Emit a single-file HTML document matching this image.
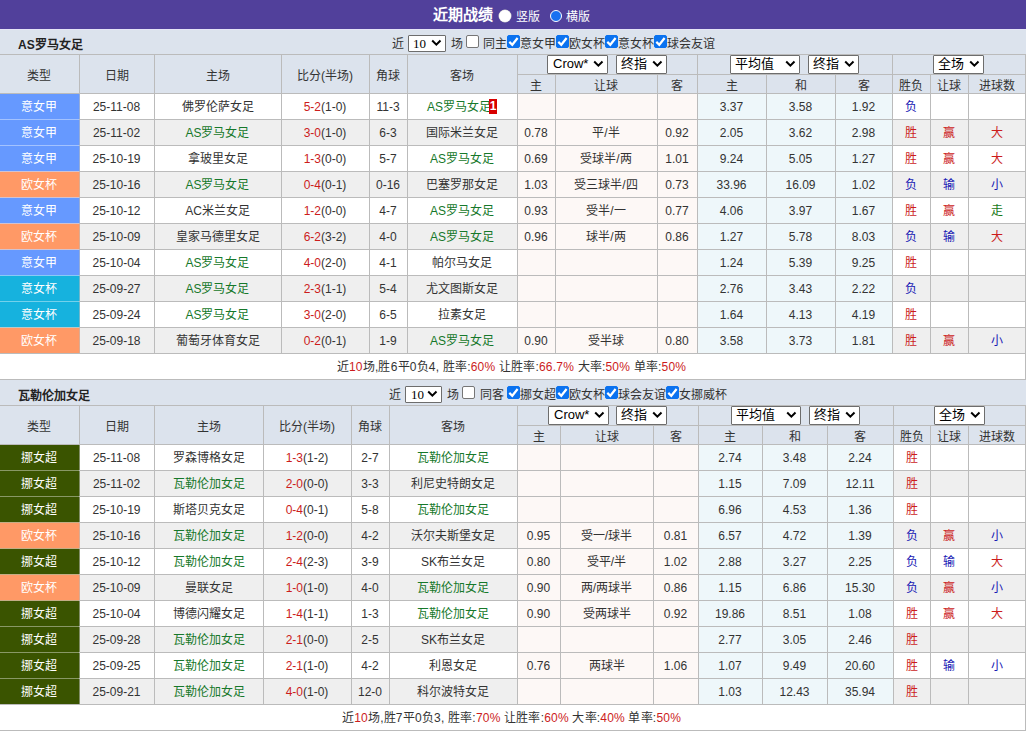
<!DOCTYPE html><html lang="zh-CN"><head><meta charset="utf-8"><style>

*{box-sizing:border-box}
html,body{margin:0;padding:0}
body{width:1031px;height:731px;overflow:hidden;position:relative;background:#fff;font-family:"Liberation Sans",sans-serif;font-size:12px;color:#333}
.r{position:absolute}
.t{position:absolute;width:600px;height:20px;line-height:20px;text-align:center;white-space:nowrap}
.lt{position:absolute;height:20px;line-height:20px;white-space:nowrap}
.sel{position:absolute;background:#fff;border:1px solid #6d6d6d;border-radius:1px;font-size:13px;color:#000}
.sl{position:absolute;top:0;line-height:16px;white-space:nowrap}
.chev{position:absolute}
.cb{position:absolute;width:13px;height:13px;border:1px solid #767676;border-radius:2px;background:#fff}
.cb.on{background:#0a72f0;border-color:#0a72f0}
.cb svg{position:absolute;left:-1px;top:-1px}
.rc{display:inline-block;background:#e00000;color:#fff;font-weight:bold;width:8px;height:15px;line-height:15px;text-align:center;vertical-align:1px;font-size:12px;margin-left:-2px;background:#d80000}
.top{position:absolute;left:0;top:0;width:1026px;height:29px;background:#51409b}
.rad{position:absolute;width:12px;height:12px;border-radius:50%}

</style></head><body>
<div class="top"></div>
<div class="lt" style="left:433px;top:5px;color:#fff;font-weight:bold;font-size:15px">近期战绩</div>
<div class="rad" style="left:499px;top:10px;background:#fff;box-shadow:0 0 0 0.5px #ccc"></div>
<div class="lt" style="left:516px;top:7px;color:#fff">竖版</div>
<div class="rad" style="left:550px;top:10px;background:#1a70f0;border:1.5px solid #fff"></div>
<div class="lt" style="left:566px;top:7px;color:#fff">横版</div>
<div class="r" style="left:0px;top:29px;width:1026px;height:25px;background:#dce3ed;"></div>
<div class="lt" style="left:18px;top:35px;font-weight:bold;color:#222">AS罗马女足</div>
<div class="lt" style="left:392px;top:34px;">近</div>
<div class="sel" style="left:408px;top:35px;width:38px;height:17px;font-family:'Liberation Serif',serif"><span class="sl" style="left:4px;line-height:15px;font-size:13px">10</span><svg class="chev" style="left:22px;top:3px" width="11" height="8" viewBox="0 0 11 8"><path d="M1.2 1.5 L5.35 5.65 L9.5 1.5" fill="none" stroke="#000" stroke-width="2"/></svg></div>
<div class="lt" style="left:451px;top:34px;">场</div>
<div class="cb" style="left:466px;top:35px"></div>
<div class="lt" style="left:483px;top:34px;">同主</div>
<div class="cb on" style="left:507px;top:35px"><svg width="13" height="13" viewBox="0 0 13 13"><path d="M2.3 6.9 L5.3 9.8 L10.6 3" fill="none" stroke="#fff" stroke-width="2.2"/></svg></div>
<div class="lt" style="left:520px;top:34px;">意女甲</div>
<div class="cb on" style="left:556px;top:35px"><svg width="13" height="13" viewBox="0 0 13 13"><path d="M2.3 6.9 L5.3 9.8 L10.6 3" fill="none" stroke="#fff" stroke-width="2.2"/></svg></div>
<div class="lt" style="left:569px;top:34px;">欧女杯</div>
<div class="cb on" style="left:605px;top:35px"><svg width="13" height="13" viewBox="0 0 13 13"><path d="M2.3 6.9 L5.3 9.8 L10.6 3" fill="none" stroke="#fff" stroke-width="2.2"/></svg></div>
<div class="lt" style="left:618px;top:34px;">意女杯</div>
<div class="cb on" style="left:654px;top:35px"><svg width="13" height="13" viewBox="0 0 13 13"><path d="M2.3 6.9 L5.3 9.8 L10.6 3" fill="none" stroke="#fff" stroke-width="2.2"/></svg></div>
<div class="lt" style="left:667px;top:34px;">球会友谊</div>
<div class="r" style="left:0px;top:54px;width:1026px;height:40px;background:#dce3ed;"></div>
<div class="r" style="left:0px;top:94px;width:1026px;height:25px;background:#ffffff;"></div>
<div class="r" style="left:518px;top:94px;width:179px;height:25px;background:#fdf8f6;"></div>
<div class="r" style="left:698px;top:94px;width:194px;height:25px;background:#eef7fa;"></div>
<div class="r" style="left:0px;top:94px;width:79px;height:25px;background:#6699ff;"></div>
<div class="r" style="left:0px;top:120px;width:1026px;height:25px;background:#efefef;"></div>
<div class="r" style="left:518px;top:120px;width:179px;height:25px;background:#fdf8f6;"></div>
<div class="r" style="left:698px;top:120px;width:194px;height:25px;background:#eef7fa;"></div>
<div class="r" style="left:0px;top:119px;width:79px;height:26px;background:#6699ff;"></div>
<div class="r" style="left:0px;top:146px;width:1026px;height:25px;background:#ffffff;"></div>
<div class="r" style="left:518px;top:146px;width:179px;height:25px;background:#fdf8f6;"></div>
<div class="r" style="left:698px;top:146px;width:194px;height:25px;background:#eef7fa;"></div>
<div class="r" style="left:0px;top:145px;width:79px;height:26px;background:#6699ff;"></div>
<div class="r" style="left:0px;top:172px;width:1026px;height:25px;background:#efefef;"></div>
<div class="r" style="left:518px;top:172px;width:179px;height:25px;background:#fdf8f6;"></div>
<div class="r" style="left:698px;top:172px;width:194px;height:25px;background:#eef7fa;"></div>
<div class="r" style="left:0px;top:171px;width:79px;height:26px;background:#ff9966;"></div>
<div class="r" style="left:0px;top:198px;width:1026px;height:25px;background:#ffffff;"></div>
<div class="r" style="left:518px;top:198px;width:179px;height:25px;background:#fdf8f6;"></div>
<div class="r" style="left:698px;top:198px;width:194px;height:25px;background:#eef7fa;"></div>
<div class="r" style="left:0px;top:197px;width:79px;height:26px;background:#6699ff;"></div>
<div class="r" style="left:0px;top:224px;width:1026px;height:25px;background:#efefef;"></div>
<div class="r" style="left:518px;top:224px;width:179px;height:25px;background:#fdf8f6;"></div>
<div class="r" style="left:698px;top:224px;width:194px;height:25px;background:#eef7fa;"></div>
<div class="r" style="left:0px;top:223px;width:79px;height:26px;background:#ff9966;"></div>
<div class="r" style="left:0px;top:250px;width:1026px;height:25px;background:#ffffff;"></div>
<div class="r" style="left:518px;top:250px;width:179px;height:25px;background:#fdf8f6;"></div>
<div class="r" style="left:698px;top:250px;width:194px;height:25px;background:#eef7fa;"></div>
<div class="r" style="left:0px;top:249px;width:79px;height:26px;background:#6699ff;"></div>
<div class="r" style="left:0px;top:276px;width:1026px;height:25px;background:#efefef;"></div>
<div class="r" style="left:518px;top:276px;width:179px;height:25px;background:#fdf8f6;"></div>
<div class="r" style="left:698px;top:276px;width:194px;height:25px;background:#eef7fa;"></div>
<div class="r" style="left:0px;top:275px;width:79px;height:26px;background:#16b2de;"></div>
<div class="r" style="left:0px;top:302px;width:1026px;height:25px;background:#ffffff;"></div>
<div class="r" style="left:518px;top:302px;width:179px;height:25px;background:#fdf8f6;"></div>
<div class="r" style="left:698px;top:302px;width:194px;height:25px;background:#eef7fa;"></div>
<div class="r" style="left:0px;top:301px;width:79px;height:26px;background:#16b2de;"></div>
<div class="r" style="left:0px;top:328px;width:1026px;height:25px;background:#efefef;"></div>
<div class="r" style="left:518px;top:328px;width:179px;height:25px;background:#fdf8f6;"></div>
<div class="r" style="left:698px;top:328px;width:194px;height:25px;background:#eef7fa;"></div>
<div class="r" style="left:0px;top:327px;width:79px;height:26px;background:#ff9966;"></div>
<div class="r" style="left:0px;top:354px;width:1026px;height:26px;background:#ffffff;"></div>
<div class="r" style="left:0px;top:54px;width:1026px;height:1px;background:#bbbbbb;"></div>
<div class="r" style="left:517px;top:74px;width:509px;height:1px;background:#bbbbbb;"></div>
<div class="r" style="left:0px;top:93px;width:1026px;height:1px;background:#bbbbbb;"></div>
<div class="r" style="left:0px;top:119px;width:1026px;height:1px;background:#bbbbbb;"></div>
<div class="r" style="left:0px;top:145px;width:1026px;height:1px;background:#bbbbbb;"></div>
<div class="r" style="left:0px;top:171px;width:1026px;height:1px;background:#bbbbbb;"></div>
<div class="r" style="left:0px;top:197px;width:1026px;height:1px;background:#bbbbbb;"></div>
<div class="r" style="left:0px;top:223px;width:1026px;height:1px;background:#bbbbbb;"></div>
<div class="r" style="left:0px;top:249px;width:1026px;height:1px;background:#bbbbbb;"></div>
<div class="r" style="left:0px;top:275px;width:1026px;height:1px;background:#bbbbbb;"></div>
<div class="r" style="left:0px;top:301px;width:1026px;height:1px;background:#bbbbbb;"></div>
<div class="r" style="left:0px;top:327px;width:1026px;height:1px;background:#bbbbbb;"></div>
<div class="r" style="left:0px;top:353px;width:1026px;height:1px;background:#bbbbbb;"></div>
<div class="r" style="left:0px;top:379px;width:1026px;height:1px;background:#bbbbbb;"></div>
<div class="r" style="left:0px;top:119px;width:79px;height:1px;background:rgb(163,194,255);"></div>
<div class="r" style="left:0px;top:145px;width:79px;height:1px;background:rgb(163,194,255);"></div>
<div class="r" style="left:0px;top:171px;width:79px;height:1px;background:rgb(209,194,209);"></div>
<div class="r" style="left:0px;top:197px;width:79px;height:1px;background:rgb(209,194,209);"></div>
<div class="r" style="left:0px;top:223px;width:79px;height:1px;background:rgb(209,194,209);"></div>
<div class="r" style="left:0px;top:249px;width:79px;height:1px;background:rgb(209,194,209);"></div>
<div class="r" style="left:0px;top:275px;width:79px;height:1px;background:rgb(139,201,245);"></div>
<div class="r" style="left:0px;top:301px;width:79px;height:1px;background:rgb(115,209,235);"></div>
<div class="r" style="left:0px;top:327px;width:79px;height:1px;background:rgb(185,201,199);"></div>
<div class="r" style="left:79px;top:54px;width:1px;height:300px;background:#bbbbbb;"></div>
<div class="r" style="left:154px;top:54px;width:1px;height:300px;background:#bbbbbb;"></div>
<div class="r" style="left:281px;top:54px;width:1px;height:300px;background:#bbbbbb;"></div>
<div class="r" style="left:369px;top:54px;width:1px;height:300px;background:#bbbbbb;"></div>
<div class="r" style="left:407px;top:54px;width:1px;height:300px;background:#bbbbbb;"></div>
<div class="r" style="left:517px;top:54px;width:1px;height:300px;background:#bbbbbb;"></div>
<div class="r" style="left:555px;top:74px;width:1px;height:280px;background:#bbbbbb;"></div>
<div class="r" style="left:657px;top:74px;width:1px;height:280px;background:#bbbbbb;"></div>
<div class="r" style="left:697px;top:54px;width:1px;height:300px;background:#bbbbbb;"></div>
<div class="r" style="left:766px;top:74px;width:1px;height:280px;background:#bbbbbb;"></div>
<div class="r" style="left:835px;top:74px;width:1px;height:280px;background:#bbbbbb;"></div>
<div class="r" style="left:892px;top:54px;width:1px;height:300px;background:#bbbbbb;"></div>
<div class="r" style="left:930px;top:74px;width:1px;height:280px;background:#bbbbbb;"></div>
<div class="r" style="left:968px;top:74px;width:1px;height:280px;background:#bbbbbb;"></div>
<div class="r" style="left:1025px;top:54px;width:1px;height:300px;background:#bbbbbb;"></div>
<div class="r" style="left:1025px;top:353px;width:1px;height:27px;background:#bbbbbb;"></div>
<div class="r" style="left:79px;top:94px;width:1px;height:25px;background:rgb(149,172,218);"></div>
<div class="r" style="left:79px;top:120px;width:1px;height:25px;background:rgb(149,172,218);"></div>
<div class="r" style="left:79px;top:146px;width:1px;height:25px;background:rgb(149,172,218);"></div>
<div class="r" style="left:79px;top:172px;width:1px;height:25px;background:rgb(218,172,149);"></div>
<div class="r" style="left:79px;top:198px;width:1px;height:25px;background:rgb(149,172,218);"></div>
<div class="r" style="left:79px;top:224px;width:1px;height:25px;background:rgb(218,172,149);"></div>
<div class="r" style="left:79px;top:250px;width:1px;height:25px;background:rgb(149,172,218);"></div>
<div class="r" style="left:79px;top:276px;width:1px;height:25px;background:rgb(113,183,203);"></div>
<div class="r" style="left:79px;top:302px;width:1px;height:25px;background:rgb(113,183,203);"></div>
<div class="r" style="left:79px;top:328px;width:1px;height:25px;background:rgb(218,172,149);"></div>
<div class="t" style="left:-261.0px;top:66px;">类型</div>
<div class="t" style="left:-183.5px;top:66px;">日期</div>
<div class="t" style="left:-82.5px;top:66px;">主场</div>
<div class="t" style="left:25.0px;top:66px;">比分(半场)</div>
<div class="t" style="left:88.0px;top:66px;">角球</div>
<div class="t" style="left:162.0px;top:66px;">客场</div>
<div class="t" style="left:236.0px;top:76px;">主</div>
<div class="t" style="left:306.0px;top:76px;">让球</div>
<div class="t" style="left:377.0px;top:76px;">客</div>
<div class="t" style="left:431.5px;top:76px;">主</div>
<div class="t" style="left:500.5px;top:76px;">和</div>
<div class="t" style="left:563.5px;top:76px;">客</div>
<div class="t" style="left:611.0px;top:76px;">胜负</div>
<div class="t" style="left:649.0px;top:76px;">让球</div>
<div class="t" style="left:696.5px;top:76px;">进球数</div>
<div class="sel" style="left:547px;top:55px;width:61px;height:19px;"><span class="sl" style="left:5px">Crow*</span><svg class="chev" style="left:45px;top:4px" width="11" height="8" viewBox="0 0 11 8"><path d="M1.2 1.5 L5.35 5.65 L9.5 1.5" fill="none" stroke="#000" stroke-width="2"/></svg></div>
<div class="sel" style="left:616px;top:55px;width:51px;height:19px;"><span class="sl" style="left:4px">终指</span><svg class="chev" style="left:35px;top:4px" width="11" height="8" viewBox="0 0 11 8"><path d="M1.2 1.5 L5.35 5.65 L9.5 1.5" fill="none" stroke="#000" stroke-width="2"/></svg></div>
<div class="sel" style="left:730px;top:55px;width:70px;height:19px;"><span class="sl" style="left:4px">平均值</span><svg class="chev" style="left:54px;top:4px" width="11" height="8" viewBox="0 0 11 8"><path d="M1.2 1.5 L5.35 5.65 L9.5 1.5" fill="none" stroke="#000" stroke-width="2"/></svg></div>
<div class="sel" style="left:808px;top:55px;width:51px;height:19px;"><span class="sl" style="left:4px">终指</span><svg class="chev" style="left:35px;top:4px" width="11" height="8" viewBox="0 0 11 8"><path d="M1.2 1.5 L5.35 5.65 L9.5 1.5" fill="none" stroke="#000" stroke-width="2"/></svg></div>
<div class="sel" style="left:933px;top:55px;width:51px;height:19px;"><span class="sl" style="left:4px">全场</span><svg class="chev" style="left:35px;top:4px" width="11" height="8" viewBox="0 0 11 8"><path d="M1.2 1.5 L5.35 5.65 L9.5 1.5" fill="none" stroke="#000" stroke-width="2"/></svg></div>
<div class="t" style="left:-261.0px;top:97px;color:#fff">意女甲</div>
<div class="t" style="left:-183.5px;top:97px;">25-11-08</div>
<div class="t" style="left:-82.5px;top:97px;">佛罗伦萨女足</div>
<div class="t" style="left:25.0px;top:97px;"><span style="color:#cc1c1c">5-2</span>(1-0)</div>
<div class="t" style="left:88.0px;top:97px;">11-3</div>
<div class="t" style="left:162.0px;top:97px;"><span style="color:#16782a">AS罗马女足</span><span class="rc">1</span></div>
<div class="t" style="left:431.5px;top:97px;">3.37</div>
<div class="t" style="left:500.5px;top:97px;">3.58</div>
<div class="t" style="left:563.5px;top:97px;">1.92</div>
<div class="t" style="left:611.0px;top:97px;color:#1818b4">负</div>
<div class="t" style="left:-261.0px;top:123px;color:#fff">意女甲</div>
<div class="t" style="left:-183.5px;top:123px;">25-11-02</div>
<div class="t" style="left:-82.5px;top:123px;"><span style="color:#16782a">AS罗马女足</span></div>
<div class="t" style="left:25.0px;top:123px;"><span style="color:#cc1c1c">3-0</span>(1-0)</div>
<div class="t" style="left:88.0px;top:123px;">6-3</div>
<div class="t" style="left:162.0px;top:123px;">国际米兰女足</div>
<div class="t" style="left:236.0px;top:123px;">0.78</div>
<div class="t" style="left:306.0px;top:123px;">平/半</div>
<div class="t" style="left:377.0px;top:123px;">0.92</div>
<div class="t" style="left:431.5px;top:123px;">2.05</div>
<div class="t" style="left:500.5px;top:123px;">3.62</div>
<div class="t" style="left:563.5px;top:123px;">2.98</div>
<div class="t" style="left:611.0px;top:123px;color:#cc1c1c">胜</div>
<div class="t" style="left:649.0px;top:123px;color:#cc1c1c">赢</div>
<div class="t" style="left:696.5px;top:123px;color:#cc1c1c">大</div>
<div class="t" style="left:-261.0px;top:149px;color:#fff">意女甲</div>
<div class="t" style="left:-183.5px;top:149px;">25-10-19</div>
<div class="t" style="left:-82.5px;top:149px;">拿玻里女足</div>
<div class="t" style="left:25.0px;top:149px;"><span style="color:#cc1c1c">1-3</span>(0-0)</div>
<div class="t" style="left:88.0px;top:149px;">5-7</div>
<div class="t" style="left:162.0px;top:149px;"><span style="color:#16782a">AS罗马女足</span></div>
<div class="t" style="left:236.0px;top:149px;">0.69</div>
<div class="t" style="left:306.0px;top:149px;">受球半/两</div>
<div class="t" style="left:377.0px;top:149px;">1.01</div>
<div class="t" style="left:431.5px;top:149px;">9.24</div>
<div class="t" style="left:500.5px;top:149px;">5.05</div>
<div class="t" style="left:563.5px;top:149px;">1.27</div>
<div class="t" style="left:611.0px;top:149px;color:#cc1c1c">胜</div>
<div class="t" style="left:649.0px;top:149px;color:#cc1c1c">赢</div>
<div class="t" style="left:696.5px;top:149px;color:#cc1c1c">大</div>
<div class="t" style="left:-261.0px;top:175px;color:#fff">欧女杯</div>
<div class="t" style="left:-183.5px;top:175px;">25-10-16</div>
<div class="t" style="left:-82.5px;top:175px;"><span style="color:#16782a">AS罗马女足</span></div>
<div class="t" style="left:25.0px;top:175px;"><span style="color:#cc1c1c">0-4</span>(0-1)</div>
<div class="t" style="left:88.0px;top:175px;">0-16</div>
<div class="t" style="left:162.0px;top:175px;">巴塞罗那女足</div>
<div class="t" style="left:236.0px;top:175px;">1.03</div>
<div class="t" style="left:306.0px;top:175px;">受三球半/四</div>
<div class="t" style="left:377.0px;top:175px;">0.73</div>
<div class="t" style="left:431.5px;top:175px;">33.96</div>
<div class="t" style="left:500.5px;top:175px;">16.09</div>
<div class="t" style="left:563.5px;top:175px;">1.02</div>
<div class="t" style="left:611.0px;top:175px;color:#1818b4">负</div>
<div class="t" style="left:649.0px;top:175px;color:#1818b4">输</div>
<div class="t" style="left:696.5px;top:175px;color:#1818b4">小</div>
<div class="t" style="left:-261.0px;top:201px;color:#fff">意女甲</div>
<div class="t" style="left:-183.5px;top:201px;">25-10-12</div>
<div class="t" style="left:-82.5px;top:201px;">AC米兰女足</div>
<div class="t" style="left:25.0px;top:201px;"><span style="color:#cc1c1c">1-2</span>(0-0)</div>
<div class="t" style="left:88.0px;top:201px;">4-7</div>
<div class="t" style="left:162.0px;top:201px;"><span style="color:#16782a">AS罗马女足</span></div>
<div class="t" style="left:236.0px;top:201px;">0.93</div>
<div class="t" style="left:306.0px;top:201px;">受半/一</div>
<div class="t" style="left:377.0px;top:201px;">0.77</div>
<div class="t" style="left:431.5px;top:201px;">4.06</div>
<div class="t" style="left:500.5px;top:201px;">3.97</div>
<div class="t" style="left:563.5px;top:201px;">1.67</div>
<div class="t" style="left:611.0px;top:201px;color:#cc1c1c">胜</div>
<div class="t" style="left:649.0px;top:201px;color:#cc1c1c">赢</div>
<div class="t" style="left:696.5px;top:201px;color:#1a7a1a">走</div>
<div class="t" style="left:-261.0px;top:227px;color:#fff">欧女杯</div>
<div class="t" style="left:-183.5px;top:227px;">25-10-09</div>
<div class="t" style="left:-82.5px;top:227px;">皇家马德里女足</div>
<div class="t" style="left:25.0px;top:227px;"><span style="color:#cc1c1c">6-2</span>(3-2)</div>
<div class="t" style="left:88.0px;top:227px;">4-0</div>
<div class="t" style="left:162.0px;top:227px;"><span style="color:#16782a">AS罗马女足</span></div>
<div class="t" style="left:236.0px;top:227px;">0.96</div>
<div class="t" style="left:306.0px;top:227px;">球半/两</div>
<div class="t" style="left:377.0px;top:227px;">0.86</div>
<div class="t" style="left:431.5px;top:227px;">1.27</div>
<div class="t" style="left:500.5px;top:227px;">5.78</div>
<div class="t" style="left:563.5px;top:227px;">8.03</div>
<div class="t" style="left:611.0px;top:227px;color:#1818b4">负</div>
<div class="t" style="left:649.0px;top:227px;color:#1818b4">输</div>
<div class="t" style="left:696.5px;top:227px;color:#cc1c1c">大</div>
<div class="t" style="left:-261.0px;top:253px;color:#fff">意女甲</div>
<div class="t" style="left:-183.5px;top:253px;">25-10-04</div>
<div class="t" style="left:-82.5px;top:253px;"><span style="color:#16782a">AS罗马女足</span></div>
<div class="t" style="left:25.0px;top:253px;"><span style="color:#cc1c1c">4-0</span>(2-0)</div>
<div class="t" style="left:88.0px;top:253px;">4-1</div>
<div class="t" style="left:162.0px;top:253px;">帕尔马女足</div>
<div class="t" style="left:431.5px;top:253px;">1.24</div>
<div class="t" style="left:500.5px;top:253px;">5.39</div>
<div class="t" style="left:563.5px;top:253px;">9.25</div>
<div class="t" style="left:611.0px;top:253px;color:#cc1c1c">胜</div>
<div class="t" style="left:-261.0px;top:279px;color:#fff">意女杯</div>
<div class="t" style="left:-183.5px;top:279px;">25-09-27</div>
<div class="t" style="left:-82.5px;top:279px;"><span style="color:#16782a">AS罗马女足</span></div>
<div class="t" style="left:25.0px;top:279px;"><span style="color:#cc1c1c">2-3</span>(1-1)</div>
<div class="t" style="left:88.0px;top:279px;">5-4</div>
<div class="t" style="left:162.0px;top:279px;">尤文图斯女足</div>
<div class="t" style="left:431.5px;top:279px;">2.76</div>
<div class="t" style="left:500.5px;top:279px;">3.43</div>
<div class="t" style="left:563.5px;top:279px;">2.22</div>
<div class="t" style="left:611.0px;top:279px;color:#1818b4">负</div>
<div class="t" style="left:-261.0px;top:305px;color:#fff">意女杯</div>
<div class="t" style="left:-183.5px;top:305px;">25-09-24</div>
<div class="t" style="left:-82.5px;top:305px;"><span style="color:#16782a">AS罗马女足</span></div>
<div class="t" style="left:25.0px;top:305px;"><span style="color:#cc1c1c">3-0</span>(2-0)</div>
<div class="t" style="left:88.0px;top:305px;">6-5</div>
<div class="t" style="left:162.0px;top:305px;">拉素女足</div>
<div class="t" style="left:431.5px;top:305px;">1.64</div>
<div class="t" style="left:500.5px;top:305px;">4.13</div>
<div class="t" style="left:563.5px;top:305px;">4.19</div>
<div class="t" style="left:611.0px;top:305px;color:#cc1c1c">胜</div>
<div class="t" style="left:-261.0px;top:331px;color:#fff">欧女杯</div>
<div class="t" style="left:-183.5px;top:331px;">25-09-18</div>
<div class="t" style="left:-82.5px;top:331px;">葡萄牙体育女足</div>
<div class="t" style="left:25.0px;top:331px;"><span style="color:#cc1c1c">0-2</span>(0-1)</div>
<div class="t" style="left:88.0px;top:331px;">1-9</div>
<div class="t" style="left:162.0px;top:331px;"><span style="color:#16782a">AS罗马女足</span></div>
<div class="t" style="left:236.0px;top:331px;">0.90</div>
<div class="t" style="left:306.0px;top:331px;">受半球</div>
<div class="t" style="left:377.0px;top:331px;">0.80</div>
<div class="t" style="left:431.5px;top:331px;">3.58</div>
<div class="t" style="left:500.5px;top:331px;">3.73</div>
<div class="t" style="left:563.5px;top:331px;">1.81</div>
<div class="t" style="left:611.0px;top:331px;color:#cc1c1c">胜</div>
<div class="t" style="left:649.0px;top:331px;color:#cc1c1c">赢</div>
<div class="t" style="left:696.5px;top:331px;color:#1818b4">小</div>
<div class="t" style="left:211.5px;top:357px;letter-spacing:0.2px">近<span style="color:#cc1c1c">10</span>场,胜6平0负4, 胜率:<span style="color:#cc1c1c">60%</span> 让胜率:<span style="color:#cc1c1c">66.7%</span> 大率:<span style="color:#cc1c1c">50%</span> 单率:<span style="color:#cc1c1c">50%</span></div>
<div class="r" style="left:0px;top:380px;width:1026px;height:25px;background:#dce3ed;"></div>
<div class="lt" style="left:18px;top:386px;font-weight:bold;color:#222">瓦勒伦加女足</div>
<div class="lt" style="left:389px;top:385px;">近</div>
<div class="sel" style="left:405px;top:386px;width:37px;height:17px;font-family:'Liberation Serif',serif"><span class="sl" style="left:5px;line-height:15px;font-size:13px">10</span><svg class="chev" style="left:21px;top:3px" width="11" height="8" viewBox="0 0 11 8"><path d="M1.2 1.5 L5.35 5.65 L9.5 1.5" fill="none" stroke="#000" stroke-width="2"/></svg></div>
<div class="lt" style="left:447px;top:385px;">场</div>
<div class="cb" style="left:462px;top:386px"></div>
<div class="lt" style="left:480px;top:385px;">同客</div>
<div class="cb on" style="left:507px;top:386px"><svg width="13" height="13" viewBox="0 0 13 13"><path d="M2.3 6.9 L5.3 9.8 L10.6 3" fill="none" stroke="#fff" stroke-width="2.2"/></svg></div>
<div class="lt" style="left:520px;top:385px;">挪女超</div>
<div class="cb on" style="left:556px;top:386px"><svg width="13" height="13" viewBox="0 0 13 13"><path d="M2.3 6.9 L5.3 9.8 L10.6 3" fill="none" stroke="#fff" stroke-width="2.2"/></svg></div>
<div class="lt" style="left:569px;top:385px;">欧女杯</div>
<div class="cb on" style="left:605px;top:386px"><svg width="13" height="13" viewBox="0 0 13 13"><path d="M2.3 6.9 L5.3 9.8 L10.6 3" fill="none" stroke="#fff" stroke-width="2.2"/></svg></div>
<div class="lt" style="left:618px;top:385px;">球会友谊</div>
<div class="cb on" style="left:666px;top:386px"><svg width="13" height="13" viewBox="0 0 13 13"><path d="M2.3 6.9 L5.3 9.8 L10.6 3" fill="none" stroke="#fff" stroke-width="2.2"/></svg></div>
<div class="lt" style="left:679px;top:385px;">女挪威杯</div>
<div class="r" style="left:0px;top:405px;width:1026px;height:40px;background:#dce3ed;"></div>
<div class="r" style="left:0px;top:445px;width:1026px;height:25px;background:#ffffff;"></div>
<div class="r" style="left:518px;top:445px;width:180px;height:25px;background:#fdf8f6;"></div>
<div class="r" style="left:699px;top:445px;width:194px;height:25px;background:#eef7fa;"></div>
<div class="r" style="left:0px;top:445px;width:79px;height:25px;background:#3a5400;"></div>
<div class="r" style="left:0px;top:471px;width:1026px;height:25px;background:#efefef;"></div>
<div class="r" style="left:518px;top:471px;width:180px;height:25px;background:#fdf8f6;"></div>
<div class="r" style="left:699px;top:471px;width:194px;height:25px;background:#eef7fa;"></div>
<div class="r" style="left:0px;top:470px;width:79px;height:26px;background:#3a5400;"></div>
<div class="r" style="left:0px;top:497px;width:1026px;height:25px;background:#ffffff;"></div>
<div class="r" style="left:518px;top:497px;width:180px;height:25px;background:#fdf8f6;"></div>
<div class="r" style="left:699px;top:497px;width:194px;height:25px;background:#eef7fa;"></div>
<div class="r" style="left:0px;top:496px;width:79px;height:26px;background:#3a5400;"></div>
<div class="r" style="left:0px;top:523px;width:1026px;height:25px;background:#efefef;"></div>
<div class="r" style="left:518px;top:523px;width:180px;height:25px;background:#fdf8f6;"></div>
<div class="r" style="left:699px;top:523px;width:194px;height:25px;background:#eef7fa;"></div>
<div class="r" style="left:0px;top:522px;width:79px;height:26px;background:#ff9966;"></div>
<div class="r" style="left:0px;top:549px;width:1026px;height:25px;background:#ffffff;"></div>
<div class="r" style="left:518px;top:549px;width:180px;height:25px;background:#fdf8f6;"></div>
<div class="r" style="left:699px;top:549px;width:194px;height:25px;background:#eef7fa;"></div>
<div class="r" style="left:0px;top:548px;width:79px;height:26px;background:#3a5400;"></div>
<div class="r" style="left:0px;top:575px;width:1026px;height:25px;background:#efefef;"></div>
<div class="r" style="left:518px;top:575px;width:180px;height:25px;background:#fdf8f6;"></div>
<div class="r" style="left:699px;top:575px;width:194px;height:25px;background:#eef7fa;"></div>
<div class="r" style="left:0px;top:574px;width:79px;height:26px;background:#ff9966;"></div>
<div class="r" style="left:0px;top:601px;width:1026px;height:25px;background:#ffffff;"></div>
<div class="r" style="left:518px;top:601px;width:180px;height:25px;background:#fdf8f6;"></div>
<div class="r" style="left:699px;top:601px;width:194px;height:25px;background:#eef7fa;"></div>
<div class="r" style="left:0px;top:600px;width:79px;height:26px;background:#3a5400;"></div>
<div class="r" style="left:0px;top:627px;width:1026px;height:25px;background:#efefef;"></div>
<div class="r" style="left:518px;top:627px;width:180px;height:25px;background:#fdf8f6;"></div>
<div class="r" style="left:699px;top:627px;width:194px;height:25px;background:#eef7fa;"></div>
<div class="r" style="left:0px;top:626px;width:79px;height:26px;background:#3a5400;"></div>
<div class="r" style="left:0px;top:653px;width:1026px;height:25px;background:#ffffff;"></div>
<div class="r" style="left:518px;top:653px;width:180px;height:25px;background:#fdf8f6;"></div>
<div class="r" style="left:699px;top:653px;width:194px;height:25px;background:#eef7fa;"></div>
<div class="r" style="left:0px;top:652px;width:79px;height:26px;background:#3a5400;"></div>
<div class="r" style="left:0px;top:679px;width:1026px;height:25px;background:#efefef;"></div>
<div class="r" style="left:518px;top:679px;width:180px;height:25px;background:#fdf8f6;"></div>
<div class="r" style="left:699px;top:679px;width:194px;height:25px;background:#eef7fa;"></div>
<div class="r" style="left:0px;top:678px;width:79px;height:26px;background:#3a5400;"></div>
<div class="r" style="left:0px;top:705px;width:1026px;height:26px;background:#ffffff;"></div>
<div class="r" style="left:0px;top:405px;width:1026px;height:1px;background:#bbbbbb;"></div>
<div class="r" style="left:517px;top:425px;width:509px;height:1px;background:#bbbbbb;"></div>
<div class="r" style="left:0px;top:444px;width:1026px;height:1px;background:#bbbbbb;"></div>
<div class="r" style="left:0px;top:470px;width:1026px;height:1px;background:#bbbbbb;"></div>
<div class="r" style="left:0px;top:496px;width:1026px;height:1px;background:#bbbbbb;"></div>
<div class="r" style="left:0px;top:522px;width:1026px;height:1px;background:#bbbbbb;"></div>
<div class="r" style="left:0px;top:548px;width:1026px;height:1px;background:#bbbbbb;"></div>
<div class="r" style="left:0px;top:574px;width:1026px;height:1px;background:#bbbbbb;"></div>
<div class="r" style="left:0px;top:600px;width:1026px;height:1px;background:#bbbbbb;"></div>
<div class="r" style="left:0px;top:626px;width:1026px;height:1px;background:#bbbbbb;"></div>
<div class="r" style="left:0px;top:652px;width:1026px;height:1px;background:#bbbbbb;"></div>
<div class="r" style="left:0px;top:678px;width:1026px;height:1px;background:#bbbbbb;"></div>
<div class="r" style="left:0px;top:704px;width:1026px;height:1px;background:#bbbbbb;"></div>
<div class="r" style="left:0px;top:730px;width:1026px;height:1px;background:#bbbbbb;"></div>
<div class="r" style="left:0px;top:470px;width:79px;height:1px;background:rgb(137,152,102);"></div>
<div class="r" style="left:0px;top:496px;width:79px;height:1px;background:rgb(137,152,102);"></div>
<div class="r" style="left:0px;top:522px;width:79px;height:1px;background:rgb(196,173,133);"></div>
<div class="r" style="left:0px;top:548px;width:79px;height:1px;background:rgb(196,173,133);"></div>
<div class="r" style="left:0px;top:574px;width:79px;height:1px;background:rgb(196,173,133);"></div>
<div class="r" style="left:0px;top:600px;width:79px;height:1px;background:rgb(196,173,133);"></div>
<div class="r" style="left:0px;top:626px;width:79px;height:1px;background:rgb(137,152,102);"></div>
<div class="r" style="left:0px;top:652px;width:79px;height:1px;background:rgb(137,152,102);"></div>
<div class="r" style="left:0px;top:678px;width:79px;height:1px;background:rgb(137,152,102);"></div>
<div class="r" style="left:79px;top:405px;width:1px;height:300px;background:#bbbbbb;"></div>
<div class="r" style="left:154px;top:405px;width:1px;height:300px;background:#bbbbbb;"></div>
<div class="r" style="left:263px;top:405px;width:1px;height:300px;background:#bbbbbb;"></div>
<div class="r" style="left:351px;top:405px;width:1px;height:300px;background:#bbbbbb;"></div>
<div class="r" style="left:389px;top:405px;width:1px;height:300px;background:#bbbbbb;"></div>
<div class="r" style="left:517px;top:405px;width:1px;height:300px;background:#bbbbbb;"></div>
<div class="r" style="left:560px;top:425px;width:1px;height:280px;background:#bbbbbb;"></div>
<div class="r" style="left:653px;top:425px;width:1px;height:280px;background:#bbbbbb;"></div>
<div class="r" style="left:698px;top:405px;width:1px;height:300px;background:#bbbbbb;"></div>
<div class="r" style="left:762px;top:425px;width:1px;height:280px;background:#bbbbbb;"></div>
<div class="r" style="left:827px;top:425px;width:1px;height:280px;background:#bbbbbb;"></div>
<div class="r" style="left:893px;top:405px;width:1px;height:300px;background:#bbbbbb;"></div>
<div class="r" style="left:930px;top:425px;width:1px;height:280px;background:#bbbbbb;"></div>
<div class="r" style="left:968px;top:425px;width:1px;height:280px;background:#bbbbbb;"></div>
<div class="r" style="left:1025px;top:405px;width:1px;height:300px;background:#bbbbbb;"></div>
<div class="r" style="left:1025px;top:704px;width:1px;height:27px;background:#bbbbbb;"></div>
<div class="r" style="left:79px;top:445px;width:1px;height:25px;background:rgb(129,141,103);"></div>
<div class="r" style="left:79px;top:471px;width:1px;height:25px;background:rgb(129,141,103);"></div>
<div class="r" style="left:79px;top:497px;width:1px;height:25px;background:rgb(129,141,103);"></div>
<div class="r" style="left:79px;top:523px;width:1px;height:25px;background:rgb(218,172,149);"></div>
<div class="r" style="left:79px;top:549px;width:1px;height:25px;background:rgb(129,141,103);"></div>
<div class="r" style="left:79px;top:575px;width:1px;height:25px;background:rgb(218,172,149);"></div>
<div class="r" style="left:79px;top:601px;width:1px;height:25px;background:rgb(129,141,103);"></div>
<div class="r" style="left:79px;top:627px;width:1px;height:25px;background:rgb(129,141,103);"></div>
<div class="r" style="left:79px;top:653px;width:1px;height:25px;background:rgb(129,141,103);"></div>
<div class="r" style="left:79px;top:679px;width:1px;height:25px;background:rgb(129,141,103);"></div>
<div class="t" style="left:-261.0px;top:417px;">类型</div>
<div class="t" style="left:-183.5px;top:417px;">日期</div>
<div class="t" style="left:-91.5px;top:417px;">主场</div>
<div class="t" style="left:7.0px;top:417px;">比分(半场)</div>
<div class="t" style="left:70.0px;top:417px;">角球</div>
<div class="t" style="left:153.0px;top:417px;">客场</div>
<div class="t" style="left:238.5px;top:427px;">主</div>
<div class="t" style="left:306.5px;top:427px;">让球</div>
<div class="t" style="left:375.5px;top:427px;">客</div>
<div class="t" style="left:430.0px;top:427px;">主</div>
<div class="t" style="left:494.5px;top:427px;">和</div>
<div class="t" style="left:560.0px;top:427px;">客</div>
<div class="t" style="left:611.5px;top:427px;">胜负</div>
<div class="t" style="left:649.0px;top:427px;">让球</div>
<div class="t" style="left:696.5px;top:427px;">进球数</div>
<div class="sel" style="left:548px;top:406px;width:61px;height:19px;"><span class="sl" style="left:5px">Crow*</span><svg class="chev" style="left:45px;top:4px" width="11" height="8" viewBox="0 0 11 8"><path d="M1.2 1.5 L5.35 5.65 L9.5 1.5" fill="none" stroke="#000" stroke-width="2"/></svg></div>
<div class="sel" style="left:616px;top:406px;width:51px;height:19px;"><span class="sl" style="left:4px">终指</span><svg class="chev" style="left:35px;top:4px" width="11" height="8" viewBox="0 0 11 8"><path d="M1.2 1.5 L5.35 5.65 L9.5 1.5" fill="none" stroke="#000" stroke-width="2"/></svg></div>
<div class="sel" style="left:731px;top:406px;width:70px;height:19px;"><span class="sl" style="left:4px">平均值</span><svg class="chev" style="left:54px;top:4px" width="11" height="8" viewBox="0 0 11 8"><path d="M1.2 1.5 L5.35 5.65 L9.5 1.5" fill="none" stroke="#000" stroke-width="2"/></svg></div>
<div class="sel" style="left:809px;top:406px;width:51px;height:19px;"><span class="sl" style="left:4px">终指</span><svg class="chev" style="left:35px;top:4px" width="11" height="8" viewBox="0 0 11 8"><path d="M1.2 1.5 L5.35 5.65 L9.5 1.5" fill="none" stroke="#000" stroke-width="2"/></svg></div>
<div class="sel" style="left:934px;top:406px;width:51px;height:19px;"><span class="sl" style="left:4px">全场</span><svg class="chev" style="left:35px;top:4px" width="11" height="8" viewBox="0 0 11 8"><path d="M1.2 1.5 L5.35 5.65 L9.5 1.5" fill="none" stroke="#000" stroke-width="2"/></svg></div>
<div class="t" style="left:-261.0px;top:448px;color:#fff">挪女超</div>
<div class="t" style="left:-183.5px;top:448px;">25-11-08</div>
<div class="t" style="left:-91.5px;top:448px;">罗森博格女足</div>
<div class="t" style="left:7.0px;top:448px;"><span style="color:#cc1c1c">1-3</span>(1-2)</div>
<div class="t" style="left:70.0px;top:448px;">2-7</div>
<div class="t" style="left:153.0px;top:448px;"><span style="color:#16782a">瓦勒伦加女足</span></div>
<div class="t" style="left:430.0px;top:448px;">2.74</div>
<div class="t" style="left:494.5px;top:448px;">3.48</div>
<div class="t" style="left:560.0px;top:448px;">2.24</div>
<div class="t" style="left:611.5px;top:448px;color:#cc1c1c">胜</div>
<div class="t" style="left:-261.0px;top:474px;color:#fff">挪女超</div>
<div class="t" style="left:-183.5px;top:474px;">25-11-02</div>
<div class="t" style="left:-91.5px;top:474px;"><span style="color:#16782a">瓦勒伦加女足</span></div>
<div class="t" style="left:7.0px;top:474px;"><span style="color:#cc1c1c">2-0</span>(0-0)</div>
<div class="t" style="left:70.0px;top:474px;">3-3</div>
<div class="t" style="left:153.0px;top:474px;">利尼史特朗女足</div>
<div class="t" style="left:430.0px;top:474px;">1.15</div>
<div class="t" style="left:494.5px;top:474px;">7.09</div>
<div class="t" style="left:560.0px;top:474px;">12.11</div>
<div class="t" style="left:611.5px;top:474px;color:#cc1c1c">胜</div>
<div class="t" style="left:-261.0px;top:500px;color:#fff">挪女超</div>
<div class="t" style="left:-183.5px;top:500px;">25-10-19</div>
<div class="t" style="left:-91.5px;top:500px;">斯塔贝克女足</div>
<div class="t" style="left:7.0px;top:500px;"><span style="color:#cc1c1c">0-4</span>(0-1)</div>
<div class="t" style="left:70.0px;top:500px;">5-8</div>
<div class="t" style="left:153.0px;top:500px;"><span style="color:#16782a">瓦勒伦加女足</span></div>
<div class="t" style="left:430.0px;top:500px;">6.96</div>
<div class="t" style="left:494.5px;top:500px;">4.53</div>
<div class="t" style="left:560.0px;top:500px;">1.36</div>
<div class="t" style="left:611.5px;top:500px;color:#cc1c1c">胜</div>
<div class="t" style="left:-261.0px;top:526px;color:#fff">欧女杯</div>
<div class="t" style="left:-183.5px;top:526px;">25-10-16</div>
<div class="t" style="left:-91.5px;top:526px;"><span style="color:#16782a">瓦勒伦加女足</span></div>
<div class="t" style="left:7.0px;top:526px;"><span style="color:#cc1c1c">1-2</span>(0-0)</div>
<div class="t" style="left:70.0px;top:526px;">4-2</div>
<div class="t" style="left:153.0px;top:526px;">沃尔夫斯堡女足</div>
<div class="t" style="left:238.5px;top:526px;">0.95</div>
<div class="t" style="left:306.5px;top:526px;">受一/球半</div>
<div class="t" style="left:375.5px;top:526px;">0.81</div>
<div class="t" style="left:430.0px;top:526px;">6.57</div>
<div class="t" style="left:494.5px;top:526px;">4.72</div>
<div class="t" style="left:560.0px;top:526px;">1.39</div>
<div class="t" style="left:611.5px;top:526px;color:#1818b4">负</div>
<div class="t" style="left:649.0px;top:526px;color:#cc1c1c">赢</div>
<div class="t" style="left:696.5px;top:526px;color:#1818b4">小</div>
<div class="t" style="left:-261.0px;top:552px;color:#fff">挪女超</div>
<div class="t" style="left:-183.5px;top:552px;">25-10-12</div>
<div class="t" style="left:-91.5px;top:552px;"><span style="color:#16782a">瓦勒伦加女足</span></div>
<div class="t" style="left:7.0px;top:552px;"><span style="color:#cc1c1c">2-4</span>(2-3)</div>
<div class="t" style="left:70.0px;top:552px;">3-9</div>
<div class="t" style="left:153.0px;top:552px;">SK布兰女足</div>
<div class="t" style="left:238.5px;top:552px;">0.80</div>
<div class="t" style="left:306.5px;top:552px;">受平/半</div>
<div class="t" style="left:375.5px;top:552px;">1.02</div>
<div class="t" style="left:430.0px;top:552px;">2.88</div>
<div class="t" style="left:494.5px;top:552px;">3.27</div>
<div class="t" style="left:560.0px;top:552px;">2.25</div>
<div class="t" style="left:611.5px;top:552px;color:#1818b4">负</div>
<div class="t" style="left:649.0px;top:552px;color:#1818b4">输</div>
<div class="t" style="left:696.5px;top:552px;color:#cc1c1c">大</div>
<div class="t" style="left:-261.0px;top:578px;color:#fff">欧女杯</div>
<div class="t" style="left:-183.5px;top:578px;">25-10-09</div>
<div class="t" style="left:-91.5px;top:578px;">曼联女足</div>
<div class="t" style="left:7.0px;top:578px;"><span style="color:#cc1c1c">1-0</span>(1-0)</div>
<div class="t" style="left:70.0px;top:578px;">4-0</div>
<div class="t" style="left:153.0px;top:578px;"><span style="color:#16782a">瓦勒伦加女足</span></div>
<div class="t" style="left:238.5px;top:578px;">0.90</div>
<div class="t" style="left:306.5px;top:578px;">两/两球半</div>
<div class="t" style="left:375.5px;top:578px;">0.86</div>
<div class="t" style="left:430.0px;top:578px;">1.15</div>
<div class="t" style="left:494.5px;top:578px;">6.86</div>
<div class="t" style="left:560.0px;top:578px;">15.30</div>
<div class="t" style="left:611.5px;top:578px;color:#1818b4">负</div>
<div class="t" style="left:649.0px;top:578px;color:#cc1c1c">赢</div>
<div class="t" style="left:696.5px;top:578px;color:#1818b4">小</div>
<div class="t" style="left:-261.0px;top:604px;color:#fff">挪女超</div>
<div class="t" style="left:-183.5px;top:604px;">25-10-04</div>
<div class="t" style="left:-91.5px;top:604px;">博德闪耀女足</div>
<div class="t" style="left:7.0px;top:604px;"><span style="color:#cc1c1c">1-4</span>(1-1)</div>
<div class="t" style="left:70.0px;top:604px;">1-3</div>
<div class="t" style="left:153.0px;top:604px;"><span style="color:#16782a">瓦勒伦加女足</span></div>
<div class="t" style="left:238.5px;top:604px;">0.90</div>
<div class="t" style="left:306.5px;top:604px;">受两球半</div>
<div class="t" style="left:375.5px;top:604px;">0.92</div>
<div class="t" style="left:430.0px;top:604px;">19.86</div>
<div class="t" style="left:494.5px;top:604px;">8.51</div>
<div class="t" style="left:560.0px;top:604px;">1.08</div>
<div class="t" style="left:611.5px;top:604px;color:#cc1c1c">胜</div>
<div class="t" style="left:649.0px;top:604px;color:#cc1c1c">赢</div>
<div class="t" style="left:696.5px;top:604px;color:#cc1c1c">大</div>
<div class="t" style="left:-261.0px;top:630px;color:#fff">挪女超</div>
<div class="t" style="left:-183.5px;top:630px;">25-09-28</div>
<div class="t" style="left:-91.5px;top:630px;"><span style="color:#16782a">瓦勒伦加女足</span></div>
<div class="t" style="left:7.0px;top:630px;"><span style="color:#cc1c1c">2-1</span>(0-0)</div>
<div class="t" style="left:70.0px;top:630px;">2-5</div>
<div class="t" style="left:153.0px;top:630px;">SK布兰女足</div>
<div class="t" style="left:430.0px;top:630px;">2.77</div>
<div class="t" style="left:494.5px;top:630px;">3.05</div>
<div class="t" style="left:560.0px;top:630px;">2.46</div>
<div class="t" style="left:611.5px;top:630px;color:#cc1c1c">胜</div>
<div class="t" style="left:-261.0px;top:656px;color:#fff">挪女超</div>
<div class="t" style="left:-183.5px;top:656px;">25-09-25</div>
<div class="t" style="left:-91.5px;top:656px;"><span style="color:#16782a">瓦勒伦加女足</span></div>
<div class="t" style="left:7.0px;top:656px;"><span style="color:#cc1c1c">2-1</span>(1-0)</div>
<div class="t" style="left:70.0px;top:656px;">4-2</div>
<div class="t" style="left:153.0px;top:656px;">利恩女足</div>
<div class="t" style="left:238.5px;top:656px;">0.76</div>
<div class="t" style="left:306.5px;top:656px;">两球半</div>
<div class="t" style="left:375.5px;top:656px;">1.06</div>
<div class="t" style="left:430.0px;top:656px;">1.07</div>
<div class="t" style="left:494.5px;top:656px;">9.49</div>
<div class="t" style="left:560.0px;top:656px;">20.60</div>
<div class="t" style="left:611.5px;top:656px;color:#cc1c1c">胜</div>
<div class="t" style="left:649.0px;top:656px;color:#1818b4">输</div>
<div class="t" style="left:696.5px;top:656px;color:#1818b4">小</div>
<div class="t" style="left:-261.0px;top:682px;color:#fff">挪女超</div>
<div class="t" style="left:-183.5px;top:682px;">25-09-21</div>
<div class="t" style="left:-91.5px;top:682px;"><span style="color:#16782a">瓦勒伦加女足</span></div>
<div class="t" style="left:7.0px;top:682px;"><span style="color:#cc1c1c">4-0</span>(1-0)</div>
<div class="t" style="left:70.0px;top:682px;">12-0</div>
<div class="t" style="left:153.0px;top:682px;">科尔波特女足</div>
<div class="t" style="left:430.0px;top:682px;">1.03</div>
<div class="t" style="left:494.5px;top:682px;">12.43</div>
<div class="t" style="left:560.0px;top:682px;">35.94</div>
<div class="t" style="left:611.5px;top:682px;color:#cc1c1c">胜</div>
<div class="t" style="left:211.5px;top:708px;letter-spacing:0.2px">近<span style="color:#cc1c1c">10</span>场,胜7平0负3, 胜率:<span style="color:#cc1c1c">70%</span> 让胜率:<span style="color:#cc1c1c">60%</span> 大率:<span style="color:#cc1c1c">40%</span> 单率:<span style="color:#cc1c1c">50%</span></div>
<div class="r" style="left:0;top:29px;width:1026px;height:1px;background:#e4e4f6"></div>
</body></html>
